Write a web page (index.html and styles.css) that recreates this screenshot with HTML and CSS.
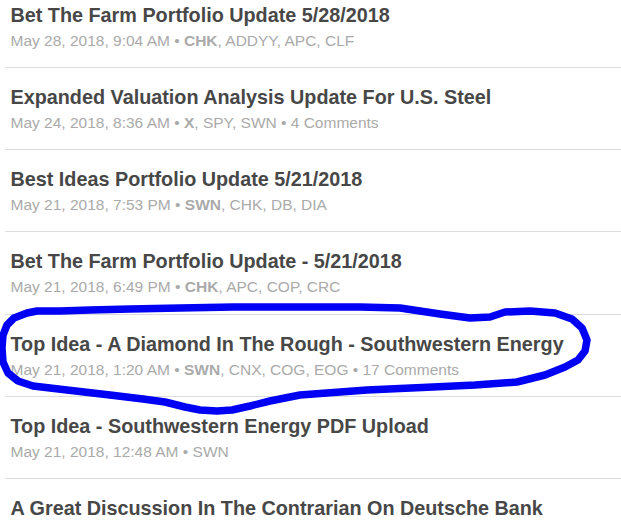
FILE: index.html
```html
<!DOCTYPE html>
<html lang="en">
<head>
  <meta charset="UTF-8" />
  <meta name="viewport" content="width=device-width, initial-scale=1.0" />
  <title>Articles</title>
  <link rel="stylesheet" href="styles.css">
</head>
<body>

  <ul id="artigos">
    <li class="artigo">
      <a class="titulo" href="#">Bet The Farm Portfolio Update 5/28/2018</a>
      <div class="meta">May 28, 2018, 9:04 AM &bull; <b>CHK</b>, ADDYY, APC, CLF</div>
    </li>
    <li class="artigo">
      <a class="titulo" href="#">Expanded Valuation Analysis Update For U.S. Steel</a>
      <div class="meta">May 24, 2018, 8:36 AM &bull; <b>X</b>, SPY, SWN &bull; 4 Comments</div>
    </li>
    <li class="artigo">
      <a class="titulo" href="#">Best Ideas Portfolio Update 5/21/2018</a>
      <div class="meta">May 21, 2018, 7:53 PM &bull; <b>SWN</b>, CHK, DB, DIA</div>
    </li>
    <li class="artigo">
      <a class="titulo" href="#">Bet The Farm Portfolio Update - 5/21/2018</a>
      <div class="meta">May 21, 2018, 6:49 PM &bull; <b>CHK</b>, APC, COP, CRC</div>
    </li>
    <li class="artigo">
      <a class="titulo" href="#">Top Idea - A Diamond In The Rough - Southwestern Energy</a>
      <div class="meta">May 21, 2018, 1:20 AM &bull; <b>SWN</b>, CNX, COG, EOG &bull; 17 Comments</div>
    </li>
    <li class="artigo">
      <a class="titulo" href="#">Top Idea - Southwestern Energy PDF Upload</a>
      <div class="meta">May 21, 2018, 12:48 AM &bull; SWN</div>
    </li>
    <li class="artigo">
      <a class="titulo" href="#">A Great Discussion In The Contrarian On Deutsche Bank</a>
    </li>
  </ul>

  <!-- marcação a mão por cima da lista -->
  <svg class="rabisco" width="621" height="528" viewBox="0 0 621 528">
    <path d="M130 309 L180 308 L233 307 L310 307 L360 307 L400 308 L440 314 L470 318 L490 317 L505 312 L530 311 L555 313 L572 319 L582 328 L587 340 L585 351 L578 360 L565 367 L545 375 L517 382 L475 385 L433 387 L367 390 L300 395 L270 401 L250 406 L232 410 L217 411 L200 410 L185 407 L165 402 L143 399 L110 395 L67 390 L33 386 L18 381 L8 373 L3 362 L2 348 L3 335 L7 325 L14 318 L27 313 L37 311 L60 311 L90 310 Z" />
  </svg>

</body>
</html>
```

FILE: styles.css
```css
* { margin: 0; padding: 0; box-sizing: border-box; }

html, body {
  height: 100%;
  overflow: hidden;
}

body {
  font-family: "Liberation Sans", Arial, sans-serif;
  background: #fff;
  position: relative;
}

#artigos {
  list-style: none;
  margin: -14.24px 0 0 5px;
}

.artigo {
  padding: 16.94px 0 12.3px 5.5px;
  border-bottom: 1px solid #dcdcdc;
}

.titulo {
  display: block;
  font-size: 19.8px;
  line-height: 24px;
  font-weight: bold;
  color: #474747;
  text-decoration: none;
  white-space: nowrap;
}

.meta {
  font-size: 15.5px;
  line-height: 28px;
  color: #aaa;
  white-space: nowrap;
}

.meta b { font-weight: bold; }

.rabisco {
  position: absolute;
  top: 0;
  left: 0;
  pointer-events: none;
}

.rabisco path {
  fill: none;
  stroke: #0000f5;
  stroke-width: 7.5;
  stroke-linejoin: round;
  stroke-linecap: round;
}
```
